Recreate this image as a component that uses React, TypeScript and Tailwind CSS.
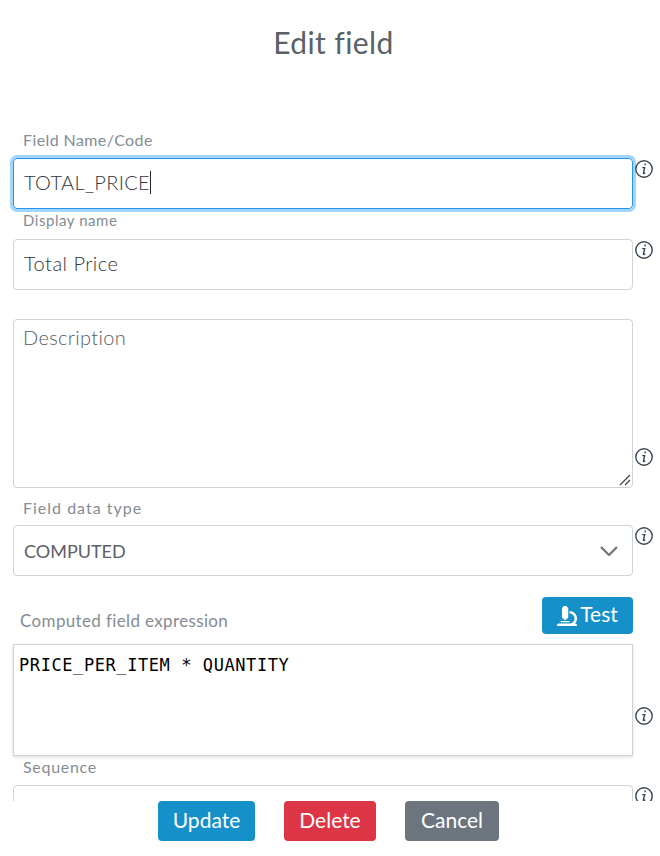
import { FaMicroscope } from 'react-icons/fa';

const font = { fontFamily: 'Lato, "Open Sans", sans-serif' };

function InfoIcon({ className = '' }: { className?: string }) {
  return (
    <svg viewBox="0 0 18 18" className={`w-[18px] h-[18px] shrink-0 ml-[2px] ${className}`} fill="none">
      <circle cx="9" cy="9" r="8.2" stroke="#3a4650" strokeWidth="1.4" />
      <path d="M9.4 3.6h1.5v1.7H9.4z" fill="#3a4650" />
      <path d="M7.2 7.6h2.5L8.4 13c-.1.5.5.7 1.9-.1" stroke="#3a4650" strokeWidth="1.4" />
    </svg>
  );
}

function Label({ children, className = 'text-[16px] tracking-[0.4px]' }: { children: string; className?: string }) {
  return <div className={`pl-[10px] h-[18px] leading-[16px] text-[#858c93] ${className}`}>{children}</div>;
}

export default function App() {
  return (
    <div className="flex flex-col h-[856px] w-[660px] bg-white" style={font}>
      {/* 제목 */}
      <h1 className="pt-[23px] pl-[7px] h-[128px] text-center text-[30px] tracking-[0.4px] leading-[38px] text-[#5a6167] shrink-0">Edit field</h1>

      <div className="h-[673px] overflow-hidden pt-[4px] pl-[13px] shrink-0">
        <Label>Field Name/Code</Label>
        <div className="flex items-start mt-[8px]">
          <div className="flex items-center w-[620px] h-[51px] rounded-[4px] border border-[#2196f3] shadow-[0_0_0_3px_#a6d5fa] px-[10px] pb-[3px] text-[20px] tracking-[0.35px] font-light text-[#2f353a]">
            TOTAL_PRICE<span className="w-px h-[23px] bg-[#212529]" />
          </div>
          <InfoIcon className="mt-[2px]" />
        </div>

        <div className="mt-[3px]"><Label className="text-[15px] tracking-[0.55px]">Display name</Label></div>
        <div className="flex items-start mt-[9px]">
          <div className="flex items-center w-[620px] h-[51px] rounded-[4px] border border-[#ced4da] px-[10px] pb-[4px] text-[20px] tracking-[0.5px] font-light text-[#2f353a]">
            Total Price
          </div>
          <InfoIcon className="mt-[2px]" />
        </div>

        <div className="flex items-end mt-[29px]">
          <div className="relative w-[620px] h-[169px] rounded-[4px] border border-[#ced4da] px-[9px] pt-[2px] text-[20px] tracking-[0.35px] leading-[30px] font-light text-[#555c63]">
            Description
            <svg viewBox="0 0 12 12" className="absolute right-[1px] bottom-[1px] w-[12px] h-[12px]" stroke="#444" strokeWidth="1.2">
              <path d="M1 11 11 1M6 11l5-5" />
            </svg>
          </div>
          <InfoIcon className="mb-[22px]" />
        </div>

        <div className="mt-[12px]"><Label className="text-[16px] tracking-[1px]">Field data type</Label></div>
        <div className="flex items-start mt-[7px]">
          <div className="flex items-center justify-between w-[620px] h-[51px] rounded-[4px] border border-[#ced4da] pl-[10px] pr-[14px] pt-[1px] text-[18px] text-[#5a6167]">
            COMPUTED
            <svg viewBox="0 0 18 10" className="w-[18px] h-[10px]" fill="none" stroke="#6c757d" strokeWidth="2.2">
              <path d="M1 1l8 8 8-8" />
            </svg>
          </div>
          <InfoIcon className="mt-[2px]" />
        </div>

        <div className="flex items-end justify-between w-[620px] mt-[21px]">
          <span className="pl-[7px] text-[17px] tracking-[0.36px] leading-[20px] mb-[3px] text-[#858c93]">Computed field expression</span>
          <button className="flex items-center gap-[3px] w-[91px] h-[37px] justify-center rounded-[4px] bg-[#1690c8] text-[21px] text-white">
            <FaMicroscope className="w-[20px] h-[20px]" />
            <span className="pb-[4px]">Test</span>
          </button>
        </div>

        <div className="flex items-end mt-[10px]">
          <div className="w-[620px] h-[112px] border border-[#ced4da] shadow-[0_1px_3px_rgba(0,0,0,0.15)] px-[5px] py-[8px] text-[17px] tracking-[0.58px] leading-[24px] text-black" style={{ fontFamily: '"DejaVu Sans Mono", monospace' }}>
            PRICE_PER_ITEM * QUANTITY
          </div>
          <InfoIcon className="mb-[31px]" />
        </div>

        <div className="mt-[3px]"><Label className="text-[16px] tracking-[0.7px]">Sequence</Label></div>
        <div className="flex items-start mt-[8px]">
          <div className="w-[620px] h-[51px] rounded-[4px] border border-[#ced4da]" />
          <InfoIcon className="mt-[2px]" />
        </div>
      </div>

      <div className="flex justify-center gap-[29px] pr-[3px]">
        <button className="w-[97px] h-[40px] pb-[2px] rounded-[4px] bg-[#1690c8] text-[21px] text-white">Update</button>
        <button className="w-[92px] h-[40px] pb-[2px] rounded-[4px] bg-[#dc3545] text-[21px] text-white">Delete</button>
        <button className="w-[94px] h-[40px] pb-[2px] rounded-[4px] bg-[#6c757d] text-[21px] text-white">Cancel</button>
      </div>
    </div>
  );
}
